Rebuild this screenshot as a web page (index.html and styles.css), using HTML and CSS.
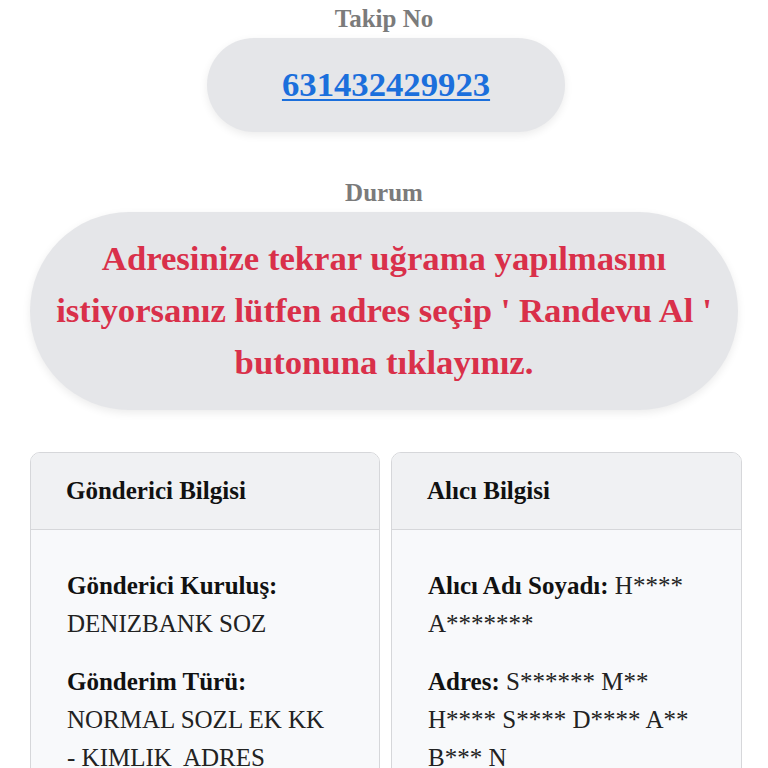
FILE: index.html
```html
<!DOCTYPE html>
<html lang="tr">
<head>
<meta charset="utf-8">
<title>Gönderi Takip</title>
<link rel="stylesheet" href="styles.css">
</head>
<body>
<main class="page">
  <section class="block block-track">
    <div class="label">Takip No</div>
    <div class="pill pill-track"><a class="track-link" href="#">631432429923</a></div>
  </section>
  <section class="block block-status">
    <div class="label">Durum</div>
    <div class="pill pill-status">Adresinize tekrar uğrama yapılmasını istiyorsanız lütfen adres seçip ' Randevu Al ' butonuna tıklayınız.</div>
  </section>
  <section class="cards">
    <div class="card">
      <div class="card-head">Gönderici Bilgisi</div>
      <div class="card-body">
        <p class="row"><b>Gönderici Kuruluş:</b> DENIZBANK SOZ</p>
        <p class="row"><b>Gönderim Türü:</b> NORMAL SOZL EK KK <span class="nowrap">- KIMLIK</span>&nbsp; ADRES TEYİTLİ</p>
      </div>
    </div>
    <div class="card">
      <div class="card-head">Alıcı Bilgisi</div>
      <div class="card-body">
        <p class="row"><b>Alıcı Adı Soyadı:</b> H**** A*******</p>
        <p class="row"><b>Adres:</b> S****** M** H**** S**** D**** A** B*** N</p>
      </div>
    </div>
  </section>
</main>
</body>
</html>
```
FILE: styles.css
```css
html, body {
  margin: 0;
  padding: 0;
  background: #ffffff;
}
body {
  font-family: "Liberation Serif", "Times New Roman", serif;
  font-size: 25px;
  line-height: 1.5;
  color: #222222;
}
.page {
  display: flex;
  flex-direction: column;
  align-items: stretch;
}
.block {
  display: flex;
  flex-direction: column;
  align-items: center;
  text-align: center;
}
.block-track {
  margin-bottom: 42px;
}
.block-status {
  margin-bottom: 42px;
  padding: 0 30px;
}
.label {
  font-weight: bold;
  color: #7b7b7b;
  line-height: 38px;
}
.pill {
  background: #e5e6e9;
  border-radius: 100px;
  box-shadow: 0 3px 8px rgba(0, 0, 0, 0.08);
}
.pill-track {
  padding: 21px 75px;
  font-size: 34.7px;
  font-weight: bold;
  line-height: 52px;
  margin-left: 4px;
}
.track-link {
  color: #1b6fdc;
  text-decoration: underline;
  text-decoration-thickness: 2px;
  text-underline-offset: 3px;
}
.pill-status {
  align-self: stretch;
  padding: 21px 18px;
  font-size: 34.7px;
  font-weight: bold;
  line-height: 52px;
  color: #d9304a;
}
.cards {
  display: grid;
  grid-template-columns: 350px 351px;
  gap: 11px;
  margin: 0 26px 0 30px;
}
.card {
  border: 1px solid #d6d7da;
  border-radius: 10px;
  overflow: hidden;
  background: #f8f9fb;
}
.card-head {
  background: #f0f1f3;
  border-bottom: 1px solid #d6d7da;
  padding: 19px 35px;
  font-weight: bold;
  color: #111111;
  line-height: 38px;
}
.card-body {
  padding: 37px 35px 20px 36px;
}
.row {
  margin: 0 0 20px;
  line-height: 38px;
  color: #222222;
}
.row b {
  color: #111111;
}
.nowrap {
  white-space: nowrap;
}
```
